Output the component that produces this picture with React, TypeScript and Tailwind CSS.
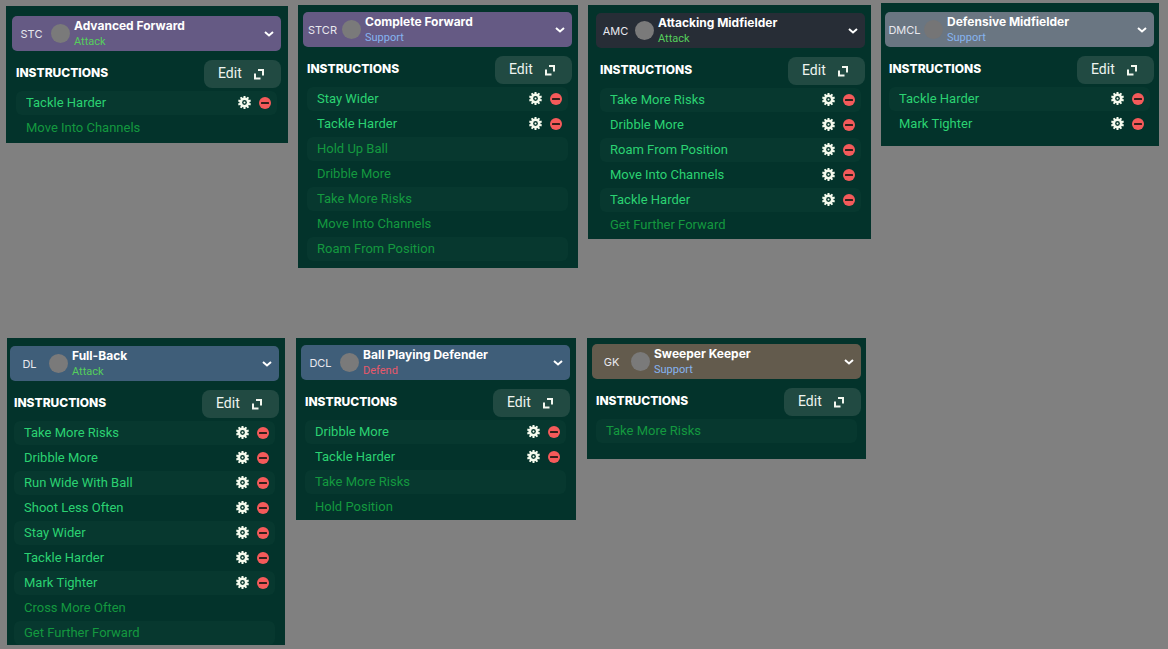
import React from "react";

type Duty = "Attack" | "Support" | "Defend";

interface Role {
  position: string;
  name: string;
  duty: Duty;
  header: string;
  disc: string;
  panel: string;
  active: string[];
  locked: string[];
}

const dutyColor: Record<Duty, string> = {
  Attack: "text-[#55cf5c]",
  Support: "text-[#86b4f0]",
  Defend: "text-[#e8586a]",
};

const topRow: Role[] = [
  {
    position: "STC",
    name: "Advanced Forward",
    duty: "Attack",
    header: "bg-[#655a84]",
    disc: "bg-[#7a7a7a]",
    panel: "lg:mt-[3px] pt-[10px] pr-[7px] pb-[3px] pl-[6px]",
    active: ["Tackle Harder"],
    locked: ["Move Into Channels"],
  },
  {
    position: "STCR",
    name: "Complete Forward",
    duty: "Support",
    header: "bg-[#655a84]",
    disc: "bg-[#7a7a7a]",
    panel: "lg:mt-[2px] pt-[7px] pr-[6px] pb-[7px] pl-[5px]",
    active: ["Stay Wider", "Tackle Harder"],
    locked: ["Hold Up Ball", "Dribble More", "Take More Risks", "Move Into Channels", "Roam From Position"],
  },
  {
    position: "AMC",
    name: "Attacking Midfielder",
    duty: "Attack",
    header: "bg-[#272d36]",
    disc: "bg-[#7a7a7a]",
    panel: "lg:mt-[2px] pt-[8px] pr-[6px] pb-[2px] pl-[8px]",
    active: ["Take More Risks", "Dribble More", "Roam From Position", "Move Into Channels", "Tackle Harder"],
    locked: ["Get Further Forward"],
  },
  {
    position: "DMCL",
    name: "Defensive Midfielder",
    duty: "Support",
    header: "bg-[#6a7682]",
    disc: "bg-[#757576]",
    panel: "pt-[9px] pr-[5px] pb-[10px] pl-[4px]",
    active: ["Tackle Harder", "Mark Tighter"],
    locked: [],
  },
];

const bottomRow: Role[] = [
  {
    position: "DL",
    name: "Full-Back",
    duty: "Attack",
    header: "bg-[#3f5e79]",
    disc: "bg-[#7a7a7a]",
    panel: "pt-[8px] pr-[6px] pl-[3px]",
    active: [
      "Take More Risks",
      "Dribble More",
      "Run Wide With Ball",
      "Shoot Less Often",
      "Stay Wider",
      "Tackle Harder",
      "Mark Tighter",
    ],
    locked: ["Cross More Often", "Get Further Forward"],
  },
  {
    position: "DCL",
    name: "Ball Playing Defender",
    duty: "Defend",
    header: "bg-[#3f5e79]",
    disc: "bg-[#7a7a7a]",
    panel: "pt-[7px] pr-[6px] pb-[1px] pl-[5px]",
    active: ["Dribble More", "Tackle Harder"],
    locked: ["Take More Risks", "Hold Position"],
  },
  {
    position: "GK",
    name: "Sweeper Keeper",
    duty: "Support",
    header: "bg-[#635b4d]",
    disc: "bg-[#7a7a7a]",
    panel: "pt-[6px] pr-[5px] pb-[16px] pl-[5px]",
    active: [],
    locked: ["Take More Risks"],
  },
];

const teeth = [0, 36, 72, 108, 144, 180, 216, 252, 288, 324];

function GearIcon() {
  return (
    <svg width="13" height="13" viewBox="0 0 13 13" aria-hidden="true">
      {teeth.map((angle) => (
        <rect key={angle} x="5.5" y="0" width="2" height="3" fill="#f6fbee" transform={`rotate(${angle} 6.5 6.5)`} />
      ))}
      <circle cx="6.5" cy="6.5" r="5" fill="#f6fbee" />
      <circle cx="6.5" cy="6.5" r="2.4" fill="#0a3a30" />
      <circle cx="6.5" cy="6.5" r="1" fill="#f6fbee" />
    </svg>
  );
}

function RemoveIcon() {
  return (
    <svg width="12" height="12" viewBox="0 0 12 12" aria-hidden="true">
      <circle cx="6" cy="6" r="6" fill="#f55a5a" />
      <rect x="2" y="5" width="8" height="2" rx="0.5" fill="#35201c" />
    </svg>
  );
}

function ExpandIcon() {
  return (
    <svg width="11" height="11" viewBox="0 0 11 11" fill="none" stroke="#f4f8f0" strokeWidth="2" aria-hidden="true">
      <path d="M4 1H9V6.5" />
      <path d="M1 4.5V9.5H6.5" />
    </svg>
  );
}

function ChevronIcon() {
  return (
    <svg width="10" height="6" viewBox="0 0 10 6" fill="none" stroke="#ffffff" strokeWidth="2" aria-hidden="true">
      <path d="M1 1L5 4.5L9 1" />
    </svg>
  );
}

function Instruction({ label, active, shaded }: { label: string; active: boolean; shaded: boolean }) {
  return (
    <li
      className={`flex h-6 items-center rounded-md pr-[6px] pl-[10px] ${shaded ? "bg-[#07382f]" : ""} ${
        active ? "text-[#2bd272]" : "text-[#14983f]"
      }`}
    >
      <span className="flex-1 self-start truncate font-['Roboto',sans-serif] text-[13px] leading-6">{label}</span>
      {active && (
        <span className="flex items-center gap-2 pb-px">
          <button type="button" aria-label={`${label} settings`}>
            <GearIcon />
          </button>
          <button type="button" aria-label={`Remove ${label}`}>
            <RemoveIcon />
          </button>
        </span>
      )}
    </li>
  );
}

function RolePanel({ role }: { role: Role }) {
  const count = role.active.length;
  return (
    <section className={`bg-[#03332b] ${role.panel}`}>
      <button
        type="button"
        aria-haspopup="listbox"
        className={`flex h-[35px] w-full items-center rounded-[5px] pr-[7px] pl-[2px] text-left ${role.header}`}
      >
        <span className="w-[35px] text-center text-[11px] leading-4 text-[#e8e8ee]">{role.position}</span>
        <span className={`ml-[2px] size-[19px] rounded-full ${role.disc}`} />
        <span className="ml-1 flex flex-1 flex-col">
          <span className="text-[12px] leading-4 font-bold text-white">{role.name}</span>
          <span className={`font-['Roboto',sans-serif] text-[11px] leading-4 ${dutyColor[role.duty]}`}>
            {role.duty}
          </span>
        </span>
        <ChevronIcon />
      </button>
      <div className="mt-[9px] flex h-7 items-center justify-between pl-1">
        <h2 className="pb-[2px] text-[12px] leading-4 font-extrabold text-white">INSTRUCTIONS</h2>
        <button
          type="button"
          className="flex h-7 w-[77px] items-center justify-between rounded-lg bg-[#214a42] pr-4 pl-[14px] text-[14px] text-[#eef4ef]"
        >
          <span className="pb-[2px] font-['Roboto',sans-serif] leading-5">Edit</span>
          <ExpandIcon />
        </button>
      </div>
      <ul className="mt-[3px] mr-1 ml-1 flex flex-col gap-px">
        {[...role.active, ...role.locked].map((label, i) => (
          <Instruction key={label} label={label} active={i < count} shaded={i % 2 === 0} />
        ))}
      </ul>
    </section>
  );
}

export default function App() {
  return (
    <main className="flex min-h-screen flex-col gap-[70px] bg-[#808080] pt-[3px] pb-1 font-['Inter',sans-serif]">
      <div className="grid grid-cols-1 items-start gap-[10px] pr-[9px] pl-[6px] sm:grid-cols-2 lg:grid-cols-[282fr_280fr_283fr_278fr]">
        {topRow.map((role) => (
          <RolePanel key={role.position} role={role} />
        ))}
      </div>
      <div className="grid grid-cols-1 items-start gap-[11px] pl-[7px] sm:grid-cols-2 lg:grid-cols-[278fr_280fr_279fr_291fr]">
        {bottomRow.map((role) => (
          <RolePanel key={role.position} role={role} />
        ))}
      </div>
    </main>
  );
}
